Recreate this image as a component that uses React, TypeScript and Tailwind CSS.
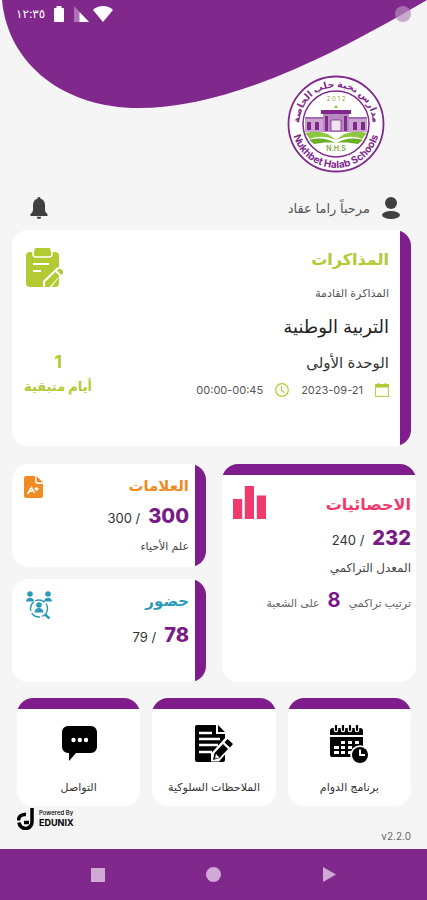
import type { ReactNode } from 'react';
import clsx from 'clsx';

const TILES = [
    { label: 'برنامج الدوام', icon: <ScheduleIcon /> },
    { label: 'الملاحظات السلوكية', icon: <NotesIcon /> },
    { label: 'التواصل', icon: <ChatIcon /> },
];

interface CardProps {
    side: 'right' | 'top';
    className?: string;
    children: ReactNode;
}

function Card({ side, className, children }: CardProps) {
    return (
        <section className={clsx('flex overflow-hidden rounded-2xl bg-white', side === 'top' && 'flex-col')}>
            <span className={clsx('shrink-0 bg-[#7f1d8d]', side === 'right' ? 'w-[11px]' : 'h-[11px]')}></span>
            <div className={clsx('flex-1', className)}>{children}</div>
        </section>
    );
}

function StatusBar() {
    return (
        <div dir="ltr" className="relative flex items-center justify-between px-4 pt-1 text-white">
            <div className="flex items-center gap-2">
                <span className="text-[12px] leading-5">١٢:٣٥</span>
                <svg className="w-3 h-4" viewBox="0 0 12 16" fill="currentColor" aria-hidden="true">
                    <path d="M3.500 0h5v2H10a1 1 0 0 1 1 1v12a1 1 0 0 1-1 1H2a1 1 0 0 1-1-1V3a1 1 0 0 1 1-1h1.500z" />
                </svg>
                <svg className="w-4 h-4" viewBox="0 0 16 16" fill="currentColor" aria-hidden="true">
                    <path d="M1 0 16 16H1z" opacity=".35" />
                    <path d="M6.500 6 16 16H6.500z" />
                </svg>
                <svg className="-ml-1 w-5 h-4" viewBox="0 0 20 16" fill="currentColor" aria-hidden="true">
                    <path d="M0 4C5-1.200 15-1.200 20 4L10 16z" />
                </svg>
            </div>
            <span className="size-4 rounded-full bg-[#b48abb]/70"></span>
        </div>
    );
}

function SchoolLogo() {
    return (
        <svg className="size-[98px]" viewBox="0 0 98 98" role="img" aria-label="Nukhbet Halab Schools">
            <defs>
                <path id="arcTop" d="M12.500 53A36.700 36.700 0 1 1 85.500 53" />
                <path id="arcBottom" d="M5 49A44 44 0 0 0 93 49" />
            </defs>
            <circle cx="49" cy="49" r="47.500" fill="#fff" stroke="#80288c" strokeWidth="1.800" />
            <circle cx="49" cy="49" r="33" fill="#fff" stroke="#80288c" strokeWidth="1.500" />
            <text fill="#80288c" fontSize="9.500" fontWeight="700" textAnchor="middle" direction="rtl">
                <textPath href="#arcTop" startOffset="50%">مدارس نخبة حلب الخاصة</textPath>
            </text>
            <text fill="#80288c" fontSize="10" fontWeight="700" textAnchor="middle" direction="ltr">
                <textPath href="#arcBottom" startOffset="50%">Nukhbet Halab Schools</textPath>
            </text>
            <text x="49" y="26" fill="#7fa83c" fontSize="6" textAnchor="middle" direction="ltr">2 0 1 2</text>
            <path d="M47 32l2-1.500 2 1.500-2 1z" fill="#79b82a" />
            <path d="M34 35h30v4H34z" fill="#80288c" />
            <path d="M36 39h26v18H36z" fill="#b98ac2" />
            <path d="M18 42h18v15H18zM62 42h18v15H62z" fill="#c9a5d0" />
            <path d="M18 42h18v2H18zM62 42h18v2H62z" fill="#a56bb1" />
            <path d="M20 47h4v8h-4zM28 47h4v8h-4zM66 47h4v8h-4zM74 47h4v8h-4zM38 41h3v15h-3zM57 41h3v15h-3z" fill="#80288c" />
            <path d="M44 45h10v11H44z" fill="#f0e4f2" stroke="#80288c" strokeWidth=".8" />
            <path d="M18 58c12-3 24-1 30 7-8-4-18-4-25-1zM80 58c-12-3-24-1-30 7 8-4 18-4 25-1z" fill="#8dc63f" />
            <path d="M22 65c11-3 20-1 26 3-8-1-14 0-21 1zM76 65c-11-3-20-1-26 3 8-1 14 0 21 1z" fill="#6fae2b" />
            <text x="49" y="76" fill="#7fa83c" fontSize="7" fontWeight="600" textAnchor="middle" direction="ltr">N.H.S</text>
        </svg>
    );
}

function BellIcon() {
    return (
        <svg className="w-[18px] h-[22px]" viewBox="0 0 18 22" fill="#404040" aria-hidden="true">
            <path d="M9 0a1.500 1.500 0 0 1 1.500 1.700C13.500 2.400 15 5 15 8v5.500q.5 2 2.500 3.500V19H.5v-2Q2.500 15.500 3 13.500V8c0-3 1.500-5.600 4.500-6.300A1.500 1.500 0 0 1 9 0zM6.800 19.800h4.400a2.200 2.200 0 0 1-4.400 0z" />
        </svg>
    );
}

function UserIcon() {
    return (
        <svg className="w-[18px] h-[22px]" viewBox="0 0 18 22" fill="#404040" aria-hidden="true">
            <circle cx="9" cy="6" r="6" />
            <ellipse cx="9" cy="18" rx="9" ry="4" />
        </svg>
    );
}

function ClipboardIcon() {
    return (
        <svg className="w-[37px] h-10" viewBox="0 0 37 40" aria-hidden="true">
            <rect y="4" width="33" height="35" rx="4" fill="#b3ca33" />
            <path d="M7 3h19v3a3 3 0 0 1-3 3H10a3 3 0 0 1-3-3z" fill="#b3ca33" stroke="#fff" strokeWidth="1.500" />
            <rect x="8.500" width="16" height="8" rx="1.500" fill="#b3ca33" />
            <path d="M7 16h16M7 23h8" stroke="#fff" strokeWidth="2" />
            <path d="M17 41v-8L31 19.500Q35 18 38 23L24 41z" fill="#fff" />
            <path d="M19 39v-5L29.500 24l4 4-10 11zM31 22.500l1-1q2-1.500 4 .5t.5 4l-1 1z" fill="#b3ca33" />
        </svg>
    );
}

function CalendarIcon() {
    return (
        <svg className="w-[14px] h-[14px]" viewBox="0 0 14 14" fill="none" stroke="#b3ca33" aria-hidden="true">
            <rect x=".6" y="1.600" width="12.800" height="11.800" />
            <path d="M.5 3h13" strokeWidth="3" />
            <path d="M3.500 0v2M10.500 0v2" strokeWidth="1.500" />
        </svg>
    );
}

function ClockIcon() {
    return (
        <svg className="w-[14px] h-[14px]" viewBox="0 0 14 14" fill="none" stroke="#b3ca33" strokeWidth="1.200" aria-hidden="true">
            <circle cx="7" cy="7" r="6.300" />
            <path d="M6.500 3v4.500L9.500 9.500" />
        </svg>
    );
}

function GradeIcon() {
    return (
        <svg className="w-[19px] h-[22px]" viewBox="0 0 19 22" aria-hidden="true">
            <path d="M2 0h9v5a3 3 0 0 0 3 3h5v12a2 2 0 0 1-2 2H2a2 2 0 0 1-2-2V2a2 2 0 0 1 2-2zM12.500 0 19 6.500h-4.500a2 2 0 0 1-2-2z" fill="#f28b22" />
            <path d="M3.500 18 7.500 11.500 10.500 17M5 15.800l4.500-1.200M10.500 13h4M12.500 11v4" fill="none" stroke="#fff" strokeWidth="1.500" />
        </svg>
    );
}

function BarsIcon() {
    return (
        <svg className="w-[33px] h-[33px]" viewBox="0 0 33 33" fill="#f03a6c" aria-hidden="true">
            <path d="M0 13h9.200v20H0zM11.800 0h9.200v33h-9.200zM23.800 9.500H33V33h-9.200z" />
        </svg>
    );
}

function AttendanceIcon() {
    return (
        <svg className="w-[26px] h-7" viewBox="0 0 26 28" fill="#2b9aba" aria-hidden="true">
            <circle cx="4" cy="3" r="2.800" />
            <path d="M0 10.500C0 5.500 8 5.500 8 10.500z" />
            <circle cx="22" cy="3" r="2.800" />
            <path d="M18 10.500c0-5 8-5 8 0z" />
            <circle cx="13" cy="14" r="2.800" />
            <path d="M8.500 21.500c0-6 9-6 9 0z" />
            <circle cx="13" cy="17.500" r="8.500" fill="none" stroke="#2b9aba" strokeWidth="1.400" strokeDasharray="10 2" />
            <path d="m19 23.500 4.500 4" stroke="#2b9aba" strokeWidth="2.500" />
        </svg>
    );
}

function ScheduleIcon() {
    return (
        <svg className="w-[38px] h-[38px]" viewBox="0 0 38 38" aria-hidden="true">
            <path d="M0 10V6a3 3 0 0 1 3-3h27a3 3 0 0 1 3 3v4zM0 12h33v20H2a2 2 0 0 1-2-2z" />
            <path d="M6 1v4M13 1v4M20 1v4M27 1v4" stroke="#fff" strokeWidth="4.500" strokeLinecap="round" />
            <path d="M6 1v4M13 1v4M20 1v4M27 1v4" stroke="#000" strokeWidth="2.200" strokeLinecap="round" />
            <path d="M11 16h4v3h-4zM18 16h4v3h-4zM25 16h4v3h-4zM4 21h5v3H4zM11 21h4v3h-4zM18 21h4v3h-4zM4 26h5v3H4zM11 26h4v3h-4zM18 26h4v3h-4z" fill="#fff" />
            <circle cx="30" cy="30" r="9.800" fill="#fff" />
            <circle cx="30" cy="30" r="8" />
            <path d="M30 24.500V30h5" fill="none" stroke="#fff" strokeWidth="2" />
        </svg>
    );
}

function NotesIcon() {
    return (
        <svg className="w-[38px] h-[38px]" viewBox="0 0 38 38" aria-hidden="true">
            <path d="M2 0h19v9h9v26a2 2 0 0 1-2 2H2a2 2 0 0 1-2-2V2a2 2 0 0 1 2-2zM23 0l7 7h-7z" />
            <path d="M4 8h13M4 14h21M4 20h19M4 27h13" stroke="#fff" strokeWidth="2.500" />
            <path d="M16 36.500v-8L31 12l8 7-15 17.500z" fill="#fff" />
            <path d="m18 35 1.500-7L28 19l5 5-8.500 9zM29.500 17.500l3-3.500 5.500 5-3 3.500z" />
            <path d="m20 33.500 1-4.500 3.500 3.500z" fill="#fff" />
        </svg>
    );
}

function ChatIcon() {
    return (
        <svg className="w-[38px] h-[38px]" viewBox="0 0 38 38" aria-hidden="true">
            <path d="M8 1h23a6 6 0 0 1 6 6v15a6 6 0 0 1-6 6H16l-7 8v-8H8a6 6 0 0 1-6-6V7a6 6 0 0 1 6-6z" />
            <circle cx="13.500" cy="15" r="2.200" fill="#fff" />
            <circle cx="19.800" cy="15" r="2.200" fill="#fff" />
            <circle cx="26" cy="15" r="2.200" fill="#fff" />
        </svg>
    );
}

function Score({ value, total }: { value: number; total: number }) {
    return (
        <p className="flex items-baseline gap-2 text-[13px] leading-8 text-[#333]">
            <b className="text-[20px] font-extrabold text-[#7a1a89]">{value}</b>
            <span>/ {total}</span>
        </p>
    );
}

function NextExam() {
    return (
        <Card side="right" className="flex min-h-[216px] justify-between pt-[15px] pr-[11px] pl-3">
            <div className="text-[#333]">
                <h2 className="text-[16px] leading-7 font-bold text-[#b3ca33]">المذاكرات</h2>
                <p className="mt-2 text-[11px] leading-6 text-[#555]">المذاكرة القادمة</p>
                <p className="mt-2 text-[18px] leading-7 text-[#222]">التربية الوطنية</p>
                <p className="mt-2 text-[15px] leading-7">الوحدة الأولى</p>
                <div className="mt-px flex items-center gap-3 text-[11px] leading-6 text-[#555]">
                    <CalendarIcon />
                    <span dir="ltr">2023-09-21</span>
                    <ClockIcon />
                    <span dir="ltr">00:00-00:45</span>
                </div>
            </div>
            <div className="flex flex-col items-end pt-[3px] text-[#b3ca33]">
                <div className="pl-[2px]">
                    <ClipboardIcon />
                </div>
                <div className="mt-[62px] self-center text-center font-bold">
                    <p className="text-[18px] leading-6">1</p>
                    <p className="text-[13px] leading-6">أيام متبقية</p>
                </div>
            </div>
        </Card>
    );
}

function Stats() {
    return (
        <Card side="top" className="pt-[11px] pr-[5px] pl-[11px]">
            <div className="flex items-start justify-between">
                <h2 className="text-[16px] leading-9 font-bold text-[#f03a6c]">الاحصائيات</h2>
                <BarsIcon />
            </div>
            <Score value={232} total={240} />
            <p className="text-[12px] leading-6 text-[#444]">المعدل التراكمي</p>
            <p className="mt-1 flex items-baseline gap-2 text-[11px] leading-8 text-[#666]">
                ترتيب تراكمي <b className="text-[20px] text-[#7a1a89]">8</b> على الشعبة
            </p>
        </Card>
    );
}

export default function App() {
    return (
        <div dir="rtl" className="flex min-h-screen flex-col bg-[#f5f5f5] font-[Inter,'DejaVu_Sans',sans-serif]">
            <header className="relative">
                <svg className="absolute inset-x-0 top-0 h-[110px] w-full" viewBox="0 0 427 110" preserveAspectRatio="none" aria-hidden="true">
                    <path d="M2 0C8 66 66 108 138 108 220 108 315 66 427 0z" fill="#80288c" />
                </svg>
                <StatusBar />
                <div className="relative mt-[51px] flex pr-[42px]">
                    <SchoolLogo />
                </div>
            </header>

            <main className="flex flex-1 flex-col pr-[11px] pl-3">
                <div className="mt-[21px] flex items-center justify-between pr-4 pl-[18px]">
                    <div className="flex items-center gap-3 text-[13px] leading-7 text-[#555]">
                        <UserIcon />
                        <span>مرحباً راما عقاد</span>
                    </div>
                    <button type="button" aria-label="الإشعارات">
                        <BellIcon />
                    </button>
                </div>

                <div className="mt-2 pr-[5px]">
                    <NextExam />
                </div>

                <div className="mt-[18px] grid grid-cols-2 gap-4">
                    <Stats />
                    <div className="flex flex-col gap-3">
                        <Card side="right" className="flex min-h-[103px] justify-between pt-2 pr-[6px] pl-3">
                            <div>
                                <h2 className="text-[15px] leading-7 font-bold text-[#f28b22]">العلامات</h2>
                                <Score value={300} total={300} />
                                <p className="text-[11px] leading-6 text-[#444]">علم الأحياء</p>
                            </div>
                            <div className="pt-1">
                                <GradeIcon />
                            </div>
                        </Card>
                        <Card side="right" className="flex min-h-[103px] justify-between pt-2 pr-[6px] pl-[14px]">
                            <div>
                                <h2 className="text-[15px] leading-7 font-bold text-[#2b9aba]">حضور</h2>
                                <div className="mt-1">
                                    <Score value={78} total={79} />
                                </div>
                            </div>
                            <div className="pt-1">
                                <AttendanceIcon />
                            </div>
                        </Card>
                    </div>
                </div>

                <nav className="mt-4 grid grid-cols-3 gap-3 px-[5px]">
                    {TILES.map((tile) => (
                        <button
                            key={tile.label}
                            type="button"
                            className="flex h-[108px] flex-col items-center overflow-hidden rounded-2xl bg-white"
                        >
                            <span className="mb-4 h-[11px] w-full shrink-0 bg-[#7f1d8d]"></span>
                            {tile.icon}
                            <span className="mt-3 text-[11px] leading-6 whitespace-nowrap text-[#333]">{tile.label}</span>
                        </button>
                    ))}
                </nav>

                <footer className="flex items-start justify-between px-[5px]">
                    <span className="pt-5 text-[10px] leading-5 text-[#666]">v2.2.0</span>
                    <div dir="ltr" className="flex items-center gap-1 pt-[2px]">
                        <svg className="w-[18px] h-[22px]" viewBox="0 0 18 22" fill="none" stroke="#000" strokeWidth="3.500" aria-hidden="true">
                            <path d="M15 0v13.500a6.500 6.500 0 0 1-13 1M1.500 12.500C1.500 8 5 6 9 6.500M7 14.500h5" />
                        </svg>
                        <div>
                            <p className="text-[6px] leading-2 font-medium">Powered By</p>
                            <p className="text-[9px] leading-3 font-bold">EDUNIX</p>
                        </div>
                    </div>
                </footer>
            </main>

            <div dir="ltr" className="flex h-[51px] items-center justify-around bg-[#80288c] px-10">
                <button type="button" aria-label="Recents">
                    <span className="block size-[14px] bg-[#d0a9d5]"></span>
                </button>
                <button type="button" aria-label="Home">
                    <span className="block size-[15px] rounded-full bg-[#d0a9d5]"></span>
                </button>
                <button type="button" aria-label="Back">
                    <svg className="w-[13px] h-[15px]" viewBox="0 0 13 15" fill="#d0a9d5" aria-hidden="true">
                        <path d="M0 0 13 7.500 0 15z" />
                    </svg>
                </button>
            </div>
        </div>
    );
}
